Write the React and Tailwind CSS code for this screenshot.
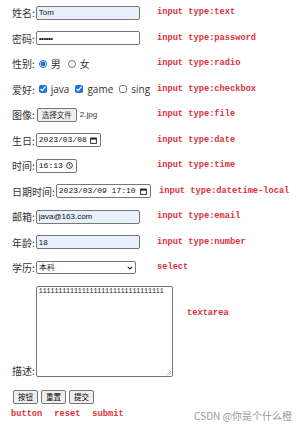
import { useState } from 'react'

const red = 'font-["Liberation_Mono",monospace] font-bold text-[8.7px] text-[#e0303a] whitespace-nowrap'
const box = 'border border-[#767676] rounded-[2px] text-[8px] px-[2px] outline-none font-["Liberation_Sans",sans-serif] text-[#111]'

function Row({ label, children, tag, h = 'h-[25.5px]', tagPad = '' }) {
  return (
    <div className={`flex items-center ${h}`}>
      <div className="w-[157px] shrink-0 pl-[12px] flex items-center gap-[1px] text-[10px] text-[#333]">
        <span className="whitespace-nowrap">{label}</span>
        {children}
      </div>
      <span className={`${red} ${tagPad}`}>{tag}</span>
    </div>
  )
}

export default function App() {
  const [sex, setSex] = useState('m')
  return (
    <div className='w-[300px] h-[427px] bg-white overflow-hidden font-["Noto_Sans_CJK_SC","Liberation_Sans",sans-serif] relative'>
      <Row label="姓名:" tag="input type:text">
        <input className={`${box} w-[104px] h-[14px] bg-[#e8f0fe]`} defaultValue="Tom" />
      </Row>
      <Row label="密码:" tag="input type:password">
        <input type="password" className={`${box} w-[104px] h-[14px] bg-white text-[5px] tracking-[-0.5px]`} defaultValue="tomtom" />
      </Row>
      <Row label="性别:" tag="input type:radio">
        <input type="radio" checked={sex === 'm'} onChange={() => setSex('m')} className="w-[8px] h-[8px] m-0 ml-[3px] accent-[#1a73e8]" />
        <span className="ml-[3px]">男</span>
        <input type="radio" checked={sex === 'f'} onChange={() => setSex('f')} className="w-[8px] h-[8px] m-0 ml-[6px] accent-[#1a73e8]" />
        <span className="ml-[3px]">女</span>
      </Row>
      <Row label="爱好:" tag="input type:checkbox">
        <input type="checkbox" defaultChecked className="w-[8px] h-[8px] m-0 ml-[3px] accent-[#1a73e8]" />
        <span className="ml-[3px] font-['Open_Sans',sans-serif]">java</span>
        <input type="checkbox" defaultChecked className="w-[8px] h-[8px] m-0 ml-[5px] accent-[#1a73e8]" />
        <span className="ml-[3px] font-['Open_Sans',sans-serif]">game</span>
        <input type="checkbox" className="w-[8px] h-[8px] m-0 ml-[5px] accent-[#1a73e8]" />
        <span className="ml-[3px] font-['Open_Sans',sans-serif]">sing</span>
      </Row>
      <Row label="图像:" tag="input type:file">
        <button className="ml-[1px] h-[14px] px-[4px] text-[7.5px] border border-[#767676] rounded-[2px] bg-[#efefef] leading-none">选择文件</button>
        <span className="ml-[2px] text-[8px] font-['Liberation_Sans',sans-serif]">2.jpg</span>
      </Row>
      <Row label="生日:" tag="input type:date">
        <div className={`${box} w-[65px] h-[14px] flex items-center justify-between font-['Liberation_Mono',monospace] text-[7.8px]`}>
          <span>2023/03/08</span>
          <CalIcon />
        </div>
      </Row>
      <Row label="时间:" tag="input type:time">
        <div className={`${box} w-[41px] h-[14px] flex items-center justify-between font-['Liberation_Mono',monospace] text-[7.8px]`}>
          <span>16:13</span>
          <ClockIcon />
        </div>
      </Row>
      <Row label="日期时间:" tag="input type:datetime-local" tagPad="ml-[2px]">
        <div className={`${box} w-[95px] h-[14px] flex items-center justify-between font-['Liberation_Mono',monospace] text-[7.4px]`}>
          <span>2023/03/09 17:10</span>
          <CalIcon />
        </div>
      </Row>
      <Row label="邮箱:" tag="input type:email">
        <input className={`${box} w-[104px] h-[14px] bg-[#e8f0fe]`} defaultValue="java@163.com" />
      </Row>
      <Row label="年龄:" tag="input type:number">
        <input className={`${box} w-[104px] h-[14px] bg-[#e8f0fe]`} defaultValue="18" />
      </Row>
      <Row label="学历:" tag="select">
        <div className={`${box} w-[100px] h-[13px] flex items-center justify-between bg-white text-[7px]`}>
          <span>本科</span>
          <svg width="6" height="4" viewBox="0 0 6 4"><path d="M0.8 0.8 L3 3 L5.2 0.8" fill="none" stroke="#222" strokeWidth="1.2" /></svg>
        </div>
      </Row>
      <div className="flex items-start mt-[5px]">
        <div className="w-[175px] shrink-0 pl-[12px] flex items-end gap-[1px] text-[10px] text-[#333]">
          <span className="whitespace-nowrap leading-none mb-[1px]">描述:</span>
          <div className="relative w-[137px] h-[91px] border border-[#767676] rounded-[2px] bg-white p-[2px] font-['Liberation_Mono',monospace] text-[6.5px] leading-none text-[#111]">
            11111111111111111111111111111111
            <svg className="absolute right-[1px] bottom-[1px]" width="5" height="5" viewBox="0 0 5 5"><path d="M5 1 L1 5 M5 3 L3 5" stroke="#999" strokeWidth="0.7" /></svg>
          </div>
        </div>
        <span className={`${red} ml-[12px] mt-[21px]`}>textarea</span>
      </div>
      <div className="flex gap-[3px] pl-[13px] mt-[13px]">
        {['按钮', '重置', '提交'].map(t => (
          <button key={t} className="h-[14px] w-[25px] text-[7.5px] border border-[#767676] rounded-[2px] bg-[#efefef] leading-none">{t}</button>
        ))}
      </div>
      <div className={`${red} flex gap-[12px] pl-[11px] mt-[4px]`}>
        <span>button</span>
        <span>reset</span>
        <span>submit</span>
      </div>
      <div className="absolute right-[8px] bottom-[4px] text-[10px] text-[#9a9a9a]">CSDN @你是个什么橙</div>
    </div>
  )
}

function CalIcon() {
  return (
    <svg width="7" height="7" viewBox="0 0 7 7" className="mr-[1px]">
      <rect x="0.6" y="1" width="5.8" height="5.4" fill="none" stroke="#222" strokeWidth="0.9" />
      <rect x="0.6" y="1" width="5.8" height="1.6" fill="#222" />
    </svg>
  )
}

function ClockIcon() {
  return (
    <svg width="7" height="7" viewBox="0 0 7 7" className="mr-[1px]">
      <circle cx="3.5" cy="3.5" r="2.9" fill="none" stroke="#222" strokeWidth="0.9" />
      <path d="M3.5 1.8 V3.6 L4.8 4.6" fill="none" stroke="#222" strokeWidth="0.8" />
    </svg>
  )
}
